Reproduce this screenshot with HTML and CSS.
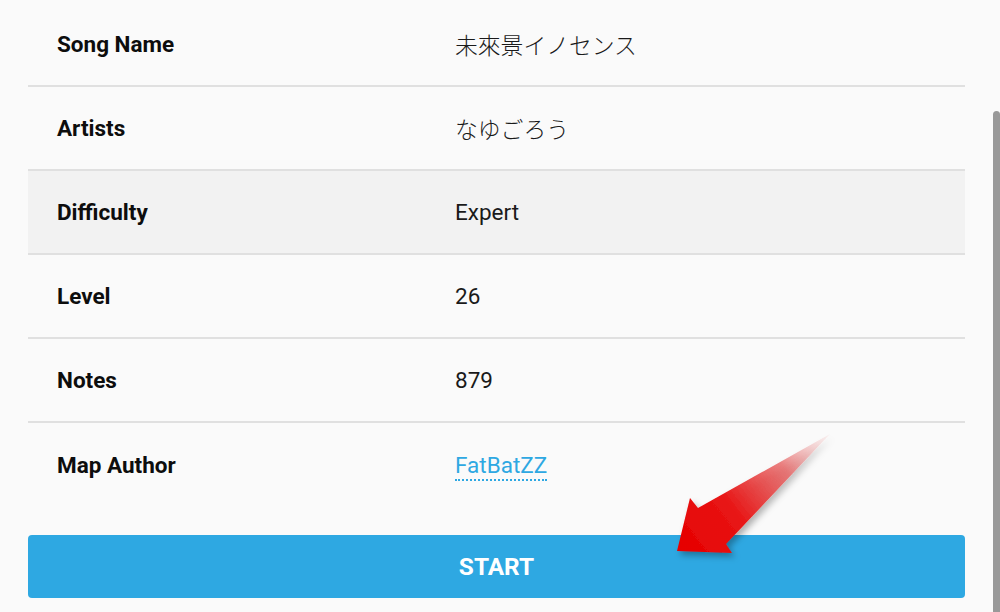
FILE: index.html
```html
<!DOCTYPE html>
<html lang="ja">
<head>
<meta charset="utf-8">
<link rel="stylesheet" href="styles.css">
</head>
<body>
<div class="page">
  <div class="info-table">
    <div class="row">
      <div class="label">Song Name</div>
      <div class="value jp">未來景イノセンス</div>
    </div>
    <div class="row">
      <div class="label">Artists</div>
      <div class="value jp">なゆごろう</div>
    </div>
    <div class="row row-alt">
      <div class="label">Difficulty</div>
      <div class="value">Expert</div>
    </div>
    <div class="row">
      <div class="label">Level</div>
      <div class="value">26</div>
    </div>
    <div class="row">
      <div class="label">Notes</div>
      <div class="value">879</div>
    </div>
    <div class="row row-last">
      <div class="label">Map Author</div>
      <div class="value"><a class="author-link" href="#">FatBatZZ</a></div>
    </div>
  </div>
  <button class="start-btn">START</button>
</div>

<svg class="arrow" width="1000" height="612" viewBox="0 0 1000 612">
  <defs>
    <linearGradient id="ag" x1="680" y1="550" x2="830" y2="434" gradientUnits="userSpaceOnUse">
      <stop offset="0" stop-color="#e60000"/>
      <stop offset="0.35" stop-color="#e81515"/>
      <stop offset="0.7" stop-color="#e65a5a" stop-opacity="0.75"/>
      <stop offset="1" stop-color="#f0b8b8" stop-opacity="0.15"/>
    </linearGradient>
    <filter id="sh" x="-20%" y="-20%" width="150%" height="150%">
      <feDropShadow dx="3" dy="4" stdDeviation="3" flood-color="#000" flood-opacity="0.3"/>
    </filter>
  </defs>
  <polygon filter="url(#sh)" fill="url(#ag)" points="830,434 698,508 690,498 677,551 732,553 726,544"/>
</svg>

<div class="scrollbar"></div>
</body>
</html>
```

FILE: styles.css
```css
html, body {
  margin: 0;
  padding: 0;
  background: #fafafa;
  overflow: hidden;
}

body {
  font-family: Roboto, "Noto Sans CJK JP", sans-serif;
  color: #111;
}

.page {
  padding: 3px 35px 0 28px;
}

.info-table {
  width: 937px;
}

.row {
  display: grid;
  grid-template-columns: 427px 1fr;
  height: 82px;
  align-items: center;
  border-bottom: 2px solid #e0e0e0;
}

.row-alt {
  background: #f2f2f2;
}

.row-last {
  border-bottom: none;
  height: 84px;
}

.label {
  padding-left: 29px;
  font-weight: 700;
  font-size: 22.5px;
  color: #0d0d0d;
}

.value {
  font-size: 22.5px;
  color: #1a1a1a;
}

.jp {
  font-family: "Noto Sans CJK JP", sans-serif;
  font-weight: 300;
  font-size: 22.8px;
}

.author-link {
  color: #2ea8e2;
  text-decoration: none;
  border-bottom: 2px dotted #2ea8e2;
  padding-bottom: 1px;
}

.start-btn {
  display: block;
  width: 937px;
  height: 63px;
  margin-top: 28px;
  border: none;
  border-radius: 4px;
  background: #2ea8e2;
  color: #fff;
  font-family: Roboto, sans-serif;
  font-weight: 700;
  font-size: 24.4px;
}

.arrow {
  position: absolute;
  left: 0;
  top: 0;
  pointer-events: none;
}

.scrollbar {
  position: absolute;
  left: 993px;
  top: 111px;
  width: 7px;
  height: 501px;
  background: #999;
  border-radius: 4px 4px 0 0;
}
```
